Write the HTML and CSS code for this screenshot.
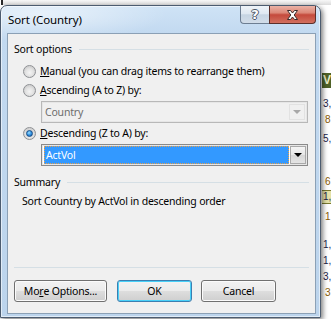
FILE: index.html
```html
<!DOCTYPE html>
<html>
<head>
<meta charset="utf-8">
<title>Sort (Country)</title>
<link rel="stylesheet" href="styles.css">
</head>
<body>
<div class="sheet">
  <div class="sheet-top"></div>
  <div class="sheet-body">
    <div class="sheet-gap"></div>
    <div class="sheet-col">
      <div class="sp sp68"></div>
      <div class="cell hdr">V</div>
      <div class="sp sp8"></div>
      <div class="cell">3,</div>
      <div class="cell num-o">8</div>
      <div class="sp sp3"></div>
      <div class="cell">5,</div>
      <div class="sp sp27"></div>
      <div class="cell num-o">6</div>
      <div class="cell sel">1,</div>
      <div class="sp sp5"></div>
      <div class="cell num-o">1</div>
      <div class="sp sp12"></div>
      <div class="cell">1,</div>
      <div class="cell">1,</div>
      <div class="cell">3,</div>
      <div class="cell num-o">3</div>
    </div>
  </div>
</div>

<div class="window">
  <div class="titlebar">
    <span class="title">Sort (Country)</span>
    <div class="caption-btns">
      <div class="cbtn help"><span class="q">?</span></div>
      <div class="cbtn close">
        <svg width="15" height="12" viewBox="0 0 15 12">
          <path d="M2.5 1.5 H5.5 L7.5 4 L9.5 1.5 H12.5 L9.2 6 L12.5 10.5 H9.5 L7.5 8 L5.5 10.5 H2.5 L5.8 6 Z" fill="#fff" stroke="#3a2a2a" stroke-width="1" stroke-linejoin="round"/>
        </svg>
      </div>
    </div>
  </div>
  <div class="client">
    <div class="group-h first"><span>Sort options</span><i class="rule"></i></div>
    <div class="radio-row manual"><span class="radio"></span><span class="lbl"><u>M</u>anual (you can drag items to rearrange them)</span></div>
    <div class="radio-row"><span class="radio"></span><span class="lbl"><u>A</u>scending (A to Z) by:</span></div>
    <div class="combo disabled">
      <div class="combo-text">Country</div>
      <div class="combo-btn"><i class="arrow"></i></div>
    </div>
    <div class="radio-row"><span class="radio checked"></span><span class="lbl"><u>D</u>escending (Z to A) by:</span></div>
    <div class="combo active">
      <div class="combo-text"><span class="hl">ActVol</span></div>
      <div class="combo-btn"><i class="arrow"></i></div>
    </div>
    <div class="group-h summary-h"><span>Summary</span><i class="rule"></i></div>
    <div class="summary">Sort Country by ActVol in descending order</div>
    <div class="separator"></div>
    <div class="buttons">
      <div class="btn more">Mo<u>r</u>e Options...</div>
      <div class="btn ok">OK</div>
      <div class="btn cancel">Cancel</div>
    </div>
  </div>
</div>
</body>
</html>
```

FILE: styles.css
```css
* { box-sizing: border-box; }
html, body { margin: 0; padding: 0; }
body {
  width: 331px;
  height: 319px;
  overflow: hidden;
  position: relative;
  background: #ffffff;
  font-family: "Noto Sans", "Open Sans", sans-serif;
  font-size: 10.5px;
  letter-spacing: -0.2px;
  color: #000;
}

/* background spreadsheet */
.sheet { width: 331px; height: 319px; display: flex; flex-direction: column; }
.sheet-top {
  height: 5px;
  background: linear-gradient(#f7f7f7, #dcdcdc);
  border-left: 2px solid #2a2a2a;
  margin-left: 1px;
}
.sheet-body { flex: 1; display: flex; }
.sheet-gap { width: 322px; }
.sheet-col {
  width: 9px;
  display: flex;
  flex-direction: column;
  overflow: hidden;
  font-family: "Liberation Sans", Arial, sans-serif;
  font-size: 10px;
  letter-spacing: 0;
  color: #1d1d4a;
}
.sp68 { height: 68px; }
.sp8 { height: 8px; }
.sp3 { height: 3px; }
.sp27 { height: 27px; }
.sp5 { height: 5px; }
.sp12 { height: 12px; }
.cell { height: 16px; line-height: 16px; padding-left: 1px; white-space: nowrap; }
.cell.num-o { color: #8a5a00; padding-left: 3px; }
.cell.hdr {
  height: 15px;
  line-height: 15px;
  background: #4f6228;
  color: #e8ecc8;
  font-weight: bold;
  font-size: 12px;
}
.cell.sel { background: #e4e2a8; border-top: 1px solid #7a7a30; border-bottom: 1px solid #7a7a30; height: 14px; line-height: 12px; }

/* dialog window */
.window {
  position: absolute;
  left: 0;
  top: 5px;
  width: 321px;
  height: 313px;
  border: 1px solid #4c5c70;
  border-radius: 7px 7px 0 0;
  padding: 0 4px 3px 6px;
  display: flex;
  flex-direction: column;
  background:
    radial-gradient(ellipse 180px 40px at 40px 8px, rgba(255,255,255,0.55), rgba(255,255,255,0) 70%),
    linear-gradient(to bottom, #cfe3f6 0px, #c2d9f0 28px, #bcd4ec 100%);
  box-shadow: inset 0 0 0 1px rgba(255,255,255,0.55), 2px 2px 5px rgba(0,0,0,0.5);
}

.titlebar {
  height: 27px;
  display: flex;
  align-items: flex-start;
  justify-content: space-between;
}
.title {
  padding-left: 1px;
  padding-top: 6px;
  font-size: 11.5px;
  letter-spacing: -0.1px;
  line-height: 16px;
  color: #000;
}
.caption-btns { display: flex; }
.cbtn {
  height: 18px;
  display: flex;
  align-items: center;
  justify-content: center;
}
.help {
  width: 29px;
  border: 1px solid #6d7e92;
  border-top: none;
  border-right: none;
  border-radius: 0 0 0 4px;
  background: linear-gradient(#eef3f8 0%, #dfe8f1 45%, #c6d4e2 52%, #d2dde9 100%);
}
.q {
  font-family: "DejaVu Sans", sans-serif;
  font-weight: bold;
  font-size: 13px;
  letter-spacing: 0;
  color: #fff;
  line-height: 13px;
  text-shadow: 1px 0 0 #4a5666, -1px 0 0 #4a5666, 0 1px 0 #4a5666, 0 -1px 0 #4a5666;
}
.close {
  width: 47px;
  border: 1px solid #5c2f2a;
  border-top: none;
  border-radius: 0 0 4px 0;
  background: linear-gradient(#eab2a6 0%, #dc8878 40%, #c54a3c 52%, #d2705f 100%);
}

/* client area */
.client {
  flex: 1;
  background: #f0f0f0;
  border: 1px solid #8ba0b5;
  padding: 0 6px 11px 6px;
  display: flex;
  flex-direction: column;
}
.group-h {
  height: 16px;
  display: flex;
  align-items: center;
}
.group-h.first { margin-top: 7px; }
.group-h.summary-h { margin-top: 8px; }
.rule {
  flex: 1;
  height: 1px;
  background: #d5dfe5;
  margin-left: 7px;
}
.radio-row {
  height: 18px;
  display: flex;
  align-items: center;
  padding-left: 9px;
  margin-top: 1px;
}
.radio-row.manual { margin-top: 5px; }
.radio {
  width: 13px;
  height: 13px;
  border-radius: 50%;
  border: 1px solid #8e9094;
  background: radial-gradient(circle at 50% 60%, #f4f4f4 0%, #e2e2e2 45%, #d0d0d0 70%, #f6f6f6 100%);
  margin-right: 4px;
  display: flex;
  align-items: center;
  justify-content: center;
  flex: none;
}
.radio.checked::after {
  content: "";
  width: 7px;
  height: 7px;
  border-radius: 50%;
  background: radial-gradient(circle at 40% 35%, #9fe0ff 0%, #3a9ae6 45%, #0d52a6 100%);
  border: 1px solid #174d86;
  box-sizing: border-box;
}
u { text-decoration: underline; text-underline-offset: 1px; }

.combo {
  margin-left: 27px;
  margin-top: 2px;
  width: 267px;
  height: 22px;
  border: 1px solid #a6a6a6;
  box-shadow: inset 0 0 0 1px #e6e6e6;
  padding: 2px;
  display: flex;
}
.combo.disabled { background: #f0f0f0; border-color: #b8b8b8; }
.combo.active { background: #ffffff; border-color: #8a8a8a; padding: 1px; }
.combo-text {
  flex: 1;
  display: flex;
  align-items: center;
  padding-left: 1px;
}
.combo.disabled .combo-text { color: #6d6d6d; }
.hl {
  flex: 1;
  height: 18px;
  line-height: 16px;
  background: #3399ff;
  color: #fff;
  border: 1px dotted #e8a048;
  padding-left: 1px;
}
.combo-btn {
  width: 16px;
  display: flex;
  align-items: center;
  justify-content: center;
}
.combo.disabled .combo-btn { border: 1px solid #e2e2e2; }
.combo.active .combo-btn {
  margin-left: 1px;
  border: 1px solid #a9a9a9;
  background: linear-gradient(#f4f4f4 0%, #e6e6e6 50%, #d6d6d6 51%, #e4e4e4 100%);
}
.arrow {
  width: 0;
  height: 0;
  border-left: 4px solid transparent;
  border-right: 4px solid transparent;
  border-top: 4px solid #000;
}
.combo.disabled .arrow { border-top-color: #a8a8a8; }

.summary {
  height: 16px;
  line-height: 16px;
  margin-top: 3px;
  padding-left: 8px;
}
.separator {
  height: 1px;
  margin-top: 58px;
  background: #d5dfe5;
}
.buttons {
  margin-top: 12px;
  display: flex;
}
.btn {
  height: 22px;
  border: 1px solid #707070;
  border-radius: 3px;
  background: linear-gradient(#f2f2f2 0%, #ebebeb 48%, #dddddd 52%, #cfcfcf 100%);
  box-shadow: inset 0 0 0 1px #fbfbfb;
  display: flex;
  align-items: center;
  justify-content: center;
}
.btn.more { width: 93px; }
.btn.ok {
  width: 75px;
  margin-left: 10px;
  border-color: #3c7fb1;
  box-shadow: inset 0 0 0 1px #48d0f8;
}
.btn.cancel { width: 75px; margin-left: 9px; }
```
